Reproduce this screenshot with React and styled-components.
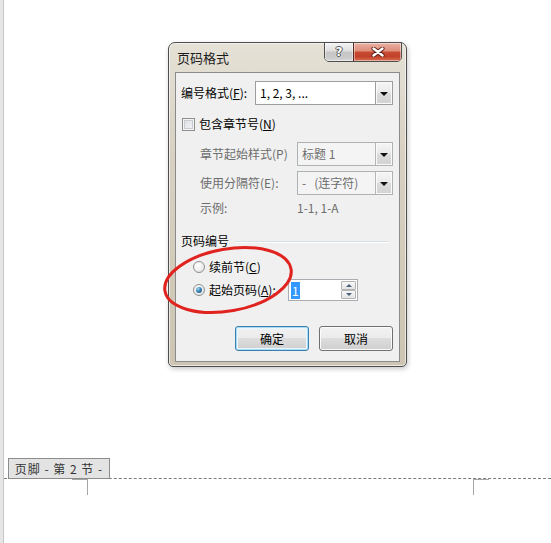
import React from "react";
import styled, { createGlobalStyle } from "styled-components";

const FONT = `"Noto Sans CJK SC", "Noto Sans", "Liberation Sans", sans-serif`;

const GlobalStyle = createGlobalStyle`
  html, body { margin: 0; padding: 0; background: #fff; }
  body { font-family: ${FONT}; }
  * { box-sizing: border-box; }
`;

const Page = styled.div`
  position: relative;
  width: 551px;
  height: 543px;
  overflow: hidden;
  display: flex;
  background: #fff;
`;

const LeftRule = styled.div`
  width: 4px;
  flex: none;
  background: #e6e6e6;
  border-right: 1px solid #c6c6c6;
`;

const Doc = styled.div`
  flex: 1;
  display: flex;
  flex-direction: column;
  padding-top: 458px;
`;

const FooterRow = styled.div`
  display: flex;
  align-items: flex-end;
  height: 21px;
  border-bottom: 1px dashed #7c7c7c;
`;

const FooterTag = styled.div`
  margin-left: 4px;
  margin-bottom: -1px;
  width: 102px;
  height: 21px;
  border: 1px solid #8c8c8c;
  background: #e3e3e3;
  color: #333;
  font-size: 12px;
  letter-spacing: 1px;
  line-height: 19px;
  text-align: center;
  white-space: pre;
  font-family: ${FONT};
`;

const MarksRow = styled.div`
  display: flex;
  justify-content: space-between;
  padding: 0 62px 0 68px;
`;

const CornerMark = styled.div`
  width: 16px;
  height: 16px;
  border-top: 1px solid #a6a6a6;
  ${(p) => (p.$side === "left" ? "border-right: 1px solid #a6a6a6;" : "border-left: 1px solid #a6a6a6;")}
`;

/* ---------- dialog ---------- */

const Dialog = styled.div`
  position: absolute;
  left: 168px;
  top: 42px;
  width: 239px;
  border: 1px solid #4e4e4e;
  border-radius: 7px 7px 5px 5px;
  background: linear-gradient(#e5e1d6 0%, #d8d1c2 35%, #cdc5b2 100%);
  box-shadow: inset 0 0 0 1px rgba(255, 255, 255, 0.6), 1px 2px 5px rgba(0, 0, 0, 0.22);
  padding: 0 6px 4px;
  font-family: ${FONT};
  font-size: 12px;
  color: #000;
`;

const TitleBar = styled.div`
  height: 29px;
  margin: 0 -6px;
  padding: 0 4px 0 8px;
  display: flex;
  align-items: flex-start;
`;

const Title = styled.div`
  flex: 1;
  font-size: 13px;
  line-height: 29px;
  color: #1b1b1b;
`;

const CaptionGroup = styled.div`
  display: flex;
  margin-top: -1px;
  height: 20px;
  border: 1px solid #4f4f4f;
  border-radius: 0 0 5px 5px;
  overflow: hidden;
`;

const CaptionButton = styled.div`
  width: ${(p) => (p.$close ? "48px" : "28px")};
  height: 100%;
  display: flex;
  align-items: center;
  justify-content: center;
  ${(p) => (p.$close ? "border-left: 1px solid #5a2a20;" : "")}
  background: ${(p) =>
    p.$close
      ? "linear-gradient(#eab1a4 0%, #de8c78 45%, #c84a31 50%, #c2412a 75%, #d9704f 100%)"
      : "linear-gradient(#f4f4f4 0%, #dedede 45%, #c6c6c6 50%, #c9c9c9 80%, #dadada 100%)"};
  box-shadow: inset 0 0 0 1px rgba(255, 255, 255, 0.45);
`;

const HelpGlyph = styled.span`
  font-family: "DejaVu Sans", sans-serif;
  font-weight: bold;
  font-size: 12px;
  line-height: 1;
  color: #fff;
  text-shadow: 1px 0 0 #555, -1px 0 0 #555, 0 1px 0 #555, 0 -1px 0 #555;
`;

const Client = styled.div`
  background: #f0f0f0;
  border: 1px solid #8b8b8b;
  padding: 8px 5px 10px 5px;
  display: flex;
  flex-direction: column;
  line-height: 16px;
`;

const Row = styled.div`
  display: flex;
  align-items: center;
  height: ${(p) => p.$h || 16}px;
  margin-top: ${(p) => p.$mt || 0}px;
  padding-left: ${(p) => p.$indent || 0}px;
  padding-right: ${(p) => p.$pr || 0}px;
  justify-content: ${(p) => p.$justify || "flex-start"};
  gap: ${(p) => p.$gap || 0}px;
`;

const Label = styled.div`
  flex: none;
  width: ${(p) => (p.$w ? `${p.$w}px` : "auto")};
  color: ${(p) => (p.$disabled ? "#6d6d6d" : "#000")};
  white-space: nowrap;
`;

const Combo = styled.div`
  display: flex;
  width: ${(p) => p.$w}px;
  height: 24px;
  border: 1px solid ${(p) => (p.$disabled ? "#adb2b5" : "#9d9d9d")};
  background: ${(p) => (p.$disabled ? "#f4f4f4" : "#fff")};
  color: ${(p) => (p.$disabled ? "#6d6d6d" : "#000")};
`;

const ComboText = styled.div`
  flex: 1;
  padding-left: 4px;
  line-height: 22px;
  white-space: pre;
`;

const DropButton = styled.div`
  width: 17px;
  flex: none;
  border-left: 1px solid ${(p) => (p.$disabled ? "#b6b6b6" : "#9d9d9d")};
  background: linear-gradient(#f6f6f6 0%, #e9e9e9 49%, #dcdcdc 50%, #d2d2d2 100%);
  box-shadow: inset 0 0 0 1px #fafafa;
  display: flex;
  align-items: center;
  justify-content: center;
`;

const DownTriangle = styled.div`
  width: 0;
  height: 0;
  border-left: 4px solid transparent;
  border-right: 4px solid transparent;
  border-top: 4px solid #111;
  margin-top: 1px;
`;

const CheckBox = styled.div`
  width: 13px;
  height: 13px;
  flex: none;
  margin-left: 1px;
  border: 1px solid #8e8f8f;
  background: linear-gradient(135deg, #d9dbdd, #f7f7f7);
  box-shadow: inset 0 0 0 1px #f4f4f4, inset 0 0 0 2px #c9cdd2;
`;

const Radio = styled.div`
  width: 12px;
  height: 12px;
  flex: none;
  border-radius: 50%;
  border: 1px solid #8e8f8f;
  background: radial-gradient(circle at 40% 35%, #ffffff 0%, #eeeeee 55%, #d8d8d8 100%);
  display: flex;
  align-items: center;
  justify-content: center;
`;

const RadioDot = styled.div`
  width: 6px;
  height: 6px;
  border-radius: 50%;
  background: radial-gradient(circle at 35% 30%, #9fd6f2 0%, #3b85b8 45%, #1a4b75 100%);
`;

const OptText = styled.div`
  margin-left: ${(p) => p.$ml || 4}px;
  width: ${(p) => (p.$w ? `${p.$w}px` : "auto")};
  flex: none;
  white-space: nowrap;
`;

const GroupLine = styled.div`
  flex: 1;
  height: 1px;
  margin: 1px 5px 0 6px;
  background: #d5dfe5;
  box-shadow: 0 1px 0 #fff;
`;

const SpinBox = styled.div`
  width: 70px;
  height: 22px;
  display: flex;
  border: 1px solid #abadb3;
  background: #fff;
`;

const SpinValue = styled.div`
  flex: 1;
  display: flex;
  align-items: center;
  padding-left: 2px;
`;

const Selected = styled.span`
  background: #3399ff;
  color: #fff;
  line-height: 17px;
  padding: 0 1px;
`;

const SpinButtons = styled.div`
  width: 16px;
  display: flex;
  flex-direction: column;
  padding: 1px 1px 1px 0;
`;

const SpinButton = styled.div`
  flex: 1;
  border: 1px solid #b4b4b4;
  border-radius: 1px;
  background: linear-gradient(#f8f8f8, #e3e3e3);
  display: flex;
  align-items: center;
  justify-content: center;
`;

const SpinArrow = styled.div`
  width: 0;
  height: 0;
  border-left: 3px solid transparent;
  border-right: 3px solid transparent;
  ${(p) => (p.$up ? "border-bottom: 3px solid #4c607a;" : "border-top: 3px solid #4c607a;")}
`;

const PushButton = styled.div`
  width: 74px;
  height: 25px;
  border: 1px solid ${(p) => (p.$default ? "#3c7fb1" : "#707070")};
  border-radius: 3px;
  background: linear-gradient(#f2f2f2 0%, #ebebeb 49%, #dddddd 50%, #cfcfcf 100%);
  box-shadow: ${(p) =>
    p.$default ? "inset 0 0 0 1px #a8dcf5, inset 0 0 0 2px #e8f6fd" : "inset 0 0 0 1px #fbfbfb"};
  display: flex;
  align-items: center;
  justify-content: center;
  color: #000;
`;

const Overlay = styled.svg`
  position: absolute;
  left: 0;
  top: 0;
  pointer-events: none;
`;

function ComboBox({ w, text, disabled }) {
  return (
    <Combo $w={w} $disabled={disabled}>
      <ComboText>{text}</ComboText>
      <DropButton $disabled={disabled}>
        <DownTriangle />
      </DropButton>
    </Combo>
  );
}

export default function App() {
  return (
    <>
      <GlobalStyle />
      <Page>
        <LeftRule />
        <Doc>
          <FooterRow>
            <FooterTag>{"页脚 - 第 2 节 -"}</FooterTag>
          </FooterRow>
          <MarksRow>
            <CornerMark $side="left" />
            <CornerMark $side="right" />
          </MarksRow>
        </Doc>

        <Dialog>
          <TitleBar>
            <Title>页码格式</Title>
            <CaptionGroup>
              <CaptionButton>
                <HelpGlyph>?</HelpGlyph>
              </CaptionButton>
              <CaptionButton $close>
                <svg width="14" height="10" viewBox="0 0 14 10">
                  <path d="M2.5 1.5 L11.5 8.5 M11.5 1.5 L2.5 8.5" stroke="#5b1d12" strokeWidth="4.2" strokeLinecap="round" fill="none" />
                  <path d="M2.5 1.5 L11.5 8.5 M11.5 1.5 L2.5 8.5" stroke="#fff" strokeWidth="2.4" strokeLinecap="round" fill="none" />
                </svg>
              </CaptionButton>
            </CaptionGroup>
          </TitleBar>

          <Client>
            <Row $h={24}>
              <Label $w={74}>
                编号格式(<u>F</u>):
              </Label>
              <ComboBox w={138} text="1, 2, 3, ..." />
            </Row>

            <Row $mt={11}>
              <CheckBox />
              <OptText $ml={4}>
                包含章节号(<u>N</u>)
              </OptText>
            </Row>

            <Row $h={24} $mt={10} $indent={19}>
              <Label $w={97} $disabled>
                章节起始样式(P)
              </Label>
              <ComboBox w={96} text="标题 1" disabled />
            </Row>

            <Row $h={24} $mt={5} $indent={19}>
              <Label $w={97} $disabled>
                使用分隔符(E):
              </Label>
              <ComboBox w={96} text={"-   (连字符)"} disabled />
            </Row>

            <Row $mt={5} $indent={19}>
              <Label $w={97} $disabled>
                示例:
              </Label>
              <Label $disabled>1-1, 1-A</Label>
            </Row>

            <Row $mt={17}>
              <Label>页码编号</Label>
              <GroupLine />
            </Row>

            <Row $mt={10} $indent={12}>
              <Radio />
              <OptText>
                续前节(<u>C</u>)
              </OptText>
            </Row>

            <Row $h={22} $mt={4} $indent={12}>
              <Radio>
                <RadioDot />
              </Radio>
              <OptText $w={79}>
                起始页码(<u>A</u>):
              </OptText>
              <SpinBox>
                <SpinValue>
                  <Selected>1</Selected>
                </SpinValue>
                <SpinButtons>
                  <SpinButton>
                    <SpinArrow $up />
                  </SpinButton>
                  <SpinButton>
                    <SpinArrow />
                  </SpinButton>
                </SpinButtons>
              </SpinBox>
            </Row>

            <Row $h={25} $mt={25} $justify="flex-end" $gap={10} $pr={1}>
              <PushButton $default>确定</PushButton>
              <PushButton>取消</PushButton>
            </Row>
          </Client>
        </Dialog>

        <Overlay width="551" height="543" viewBox="0 0 551 543">
          <ellipse
            cx="228"
            cy="280"
            rx="64"
            ry="31"
            transform="rotate(-10 228 280)"
            fill="none"
            stroke="#e0231e"
            strokeWidth="3"
          />
        </Overlay>
      </Page>
    </>
  );
}
